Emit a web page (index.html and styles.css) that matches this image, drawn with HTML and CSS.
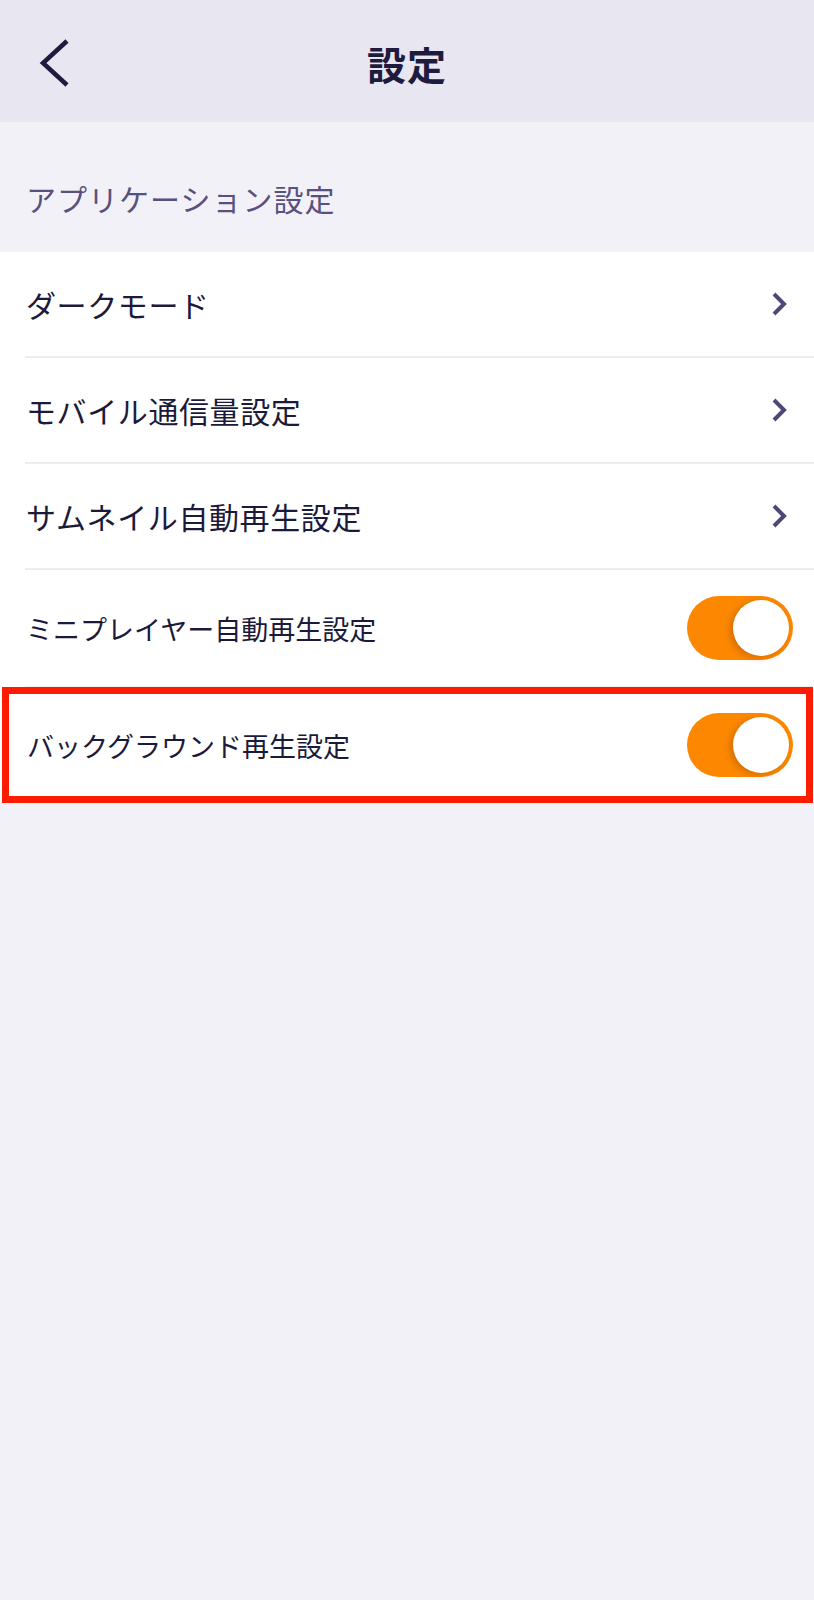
FILE: index.html
```
<!DOCTYPE html>
<html lang="ja">

<head>
    <meta charset="UTF-8" />
    <meta name="viewport" content="width=device-width, initial-scale=1.0" />
    <title>設定</title>
    <link rel="stylesheet" href="styles.css">
</head>

<body>
    <header class="nav-bar">
        <a class="back-button" href="#" aria-label="戻る">
            <svg width="30" height="50" viewBox="0 0 30 50">
                <path d="M28 3 L4 25 L28 47" fill="none" stroke="#1f1b3f" stroke-width="4.5" />
            </svg>
        </a>
        <h1>設定</h1>
        <span></span>
    </header>

    <div class="section-label">アプリケーション設定</div>

    <div class="settings-list">
        <a class="row row-large" href="#">
            <span>ダークモード</span>
            <svg class="chevron" width="16" height="26" viewBox="0 0 16 26">
                <path d="M3 3 L13 13 L3 23" fill="none" stroke="#4e4778" stroke-width="4" />
            </svg>
        </a>
        <a class="row row-large" href="#">
            <span>モバイル通信量設定</span>
            <svg class="chevron" width="16" height="26" viewBox="0 0 16 26">
                <path d="M3 3 L13 13 L3 23" fill="none" stroke="#4e4778" stroke-width="4" />
            </svg>
        </a>
        <a class="row row-large" href="#">
            <span>サムネイル自動再生設定</span>
            <svg class="chevron" width="16" height="26" viewBox="0 0 16 26">
                <path d="M3 3 L13 13 L3 23" fill="none" stroke="#4e4778" stroke-width="4" />
            </svg>
        </a>
        <div class="row row-small">
            <span>ミニプレイヤー自動再生設定</span>
            <span class="toggle"><span class="knob"></span></span>
        </div>
        <div class="row row-small row-marked">
            <span>バックグラウンド再生設定</span>
            <span class="toggle"><span class="knob"></span></span>
        </div>
    </div>
</body>

</html>
```

FILE: styles.css
```
body {
    font-family: "Noto Sans CJK JP", "Noto Sans", sans-serif;
    background-color: #f2f1f7;
    color: #1c1a3b;
    margin: 0;
    padding: 0;
    min-height: 1600px;
}

.nav-bar {
    height: 122px;
    background-color: #e8e6f0;
    display: grid;
    grid-template-columns: 1fr auto 1fr;
    align-items: center;
    padding: 0 39px;
    box-sizing: border-box;
}

.back-button {
    display: flex;
    align-items: center;
    height: 50px;
    padding-top: 4px;
}

.nav-bar h1 {
    margin: 0;
    padding-top: 4px;
    font-size: 39px;
    font-weight: 700;
    letter-spacing: 1px;
    line-height: 1;
    color: #1f1b3f;
}

.section-label {
    height: 130px;
    box-sizing: border-box;
    padding: 22px 26px 0;
    display: flex;
    align-items: center;
    font-size: 30px;
    letter-spacing: 1px;
    line-height: 1;
    color: #58517f;
}

.settings-list {
    background-color: #ffffff;
}

.row {
    display: flex;
    align-items: center;
    justify-content: space-between;
    margin-left: 25px;
    padding: 0 21px 0 1px;
    line-height: 1;
    color: #1c1a3b;
    text-decoration: none;
}

.row-large {
    height: 106px;
    box-sizing: border-box;
    border-bottom: 2px solid #ebebf0;
    font-size: 30px;
    letter-spacing: 0.6px;
}

.row-small {
    height: 117px;
    box-sizing: border-box;
    border-bottom: 1px solid #efeff3;
    font-size: 27px;
}

.chevron {
    margin-right: 6px;
}

.row-marked {
    margin: 0 1px 0 2px;
    padding: 0 13px 0 18px;
    height: 116px;
    border: 7px solid #fe1c00;
}

.toggle {
    display: flex;
    justify-content: flex-end;
    align-items: center;
    width: 106px;
    height: 64px;
    padding: 0 4px;
    box-sizing: border-box;
    border-radius: 32px;
    background-color: #fd8800;
}

.knob {
    width: 56px;
    height: 56px;
    border-radius: 50%;
    background-color: #ffffff;
    box-shadow: -3px 2px 7px rgba(120, 50, 0, 0.3);
}
```
